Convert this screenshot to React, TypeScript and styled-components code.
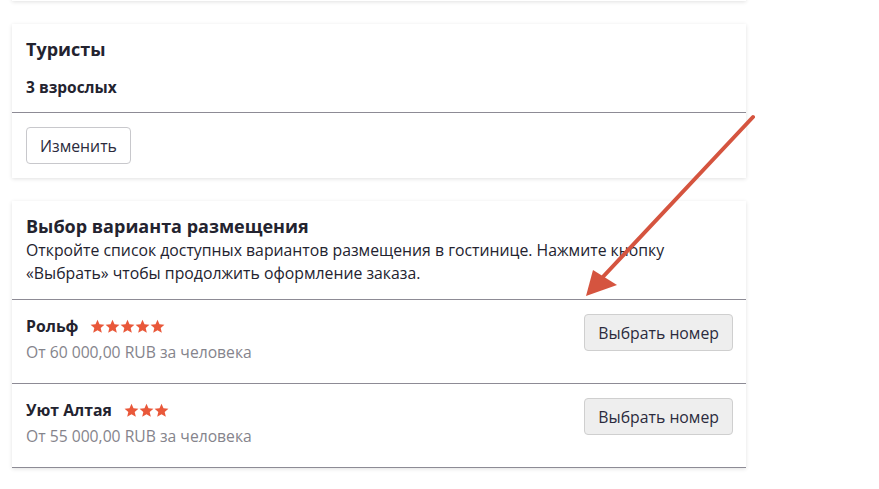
import styled, {createGlobalStyle} from "styled-components";

const GlobalStyle = createGlobalStyle`
  html, body {
    margin: 0;
    padding: 0;
    background: #ffffff;
    font-family: "Open Sans", "Liberation Sans", sans-serif;
    color: #23232f;
  }
`;

type Hotel = {
    name: string;
    stars: number;
    price: string;
};

const hotels: Hotel[] = [
    {name: "Рольф", stars: 5, price: "От 60 000,00 RUB за человека"},
    {name: "Уют Алтая", stars: 3, price: "От 55 000,00 RUB за человека"},
];

const Page = styled.div`
  position: relative;
  width: 879px;
  height: 489px;
  overflow: hidden;
`;

const Column = styled.div`
  display: flex;
  flex-direction: column;
  gap: 23px;
  width: 734px;
  margin: -40px 0 0 12px;
`;

const Card = styled.section`
  background: #fff;
  box-shadow: 0 1px 4px rgba(0, 0, 0, 0.12);
`;

const Stub = styled(Card)`
  height: 41px;
`;

const Head = styled.div<{$top?: number; $bottom?: number}>`
  padding: ${p => p.$top ?? 13}px 14px ${p => p.$bottom ?? 13}px;
  border-bottom: 1px solid #8d8b95;
`;

const Title = styled.h2`
  margin: 0;
  font-size: 18px;
  line-height: 25px;
  font-weight: 700;
`;

const Sub = styled.div`
  margin-top: 13px;
  font-size: 15.5px;
  line-height: 24px;
  font-weight: 700;
`;

const Desc = styled.p`
  margin: 0;
  font-size: 15.8px;
  line-height: 23px;
`;

const Foot = styled.div`
  padding: 14px;
`;

const Button = styled.button<{$grey?: boolean}>`
  font-family: "Open Sans", "Liberation Sans", sans-serif;
  font-size: 15.8px;
  color: #2b2b3d;
  height: 37px;
  padding: 0 13px;
  border: 1px solid ${p => (p.$grey ? "#cfcfcf" : "#c8c8cc")};
  border-radius: 4px;
  background: ${p => (p.$grey ? "#eeeeee" : "#ffffff")};
  cursor: pointer;
`;

const Row = styled.div`
  display: flex;
  justify-content: space-between;
  align-items: flex-start;
  padding: 14px 13px 19px 14px;
  border-bottom: 1px solid #8d8b95;
`;

const NameLine = styled.div`
  display: flex;
  align-items: center;
  gap: 12px;
  font-size: 15.8px;
  line-height: 24px;
  font-weight: 700;
`;

const Stars = styled.span`
  display: inline-flex;
  gap: 0;
`;

const Price = styled.div`
  margin-top: 3px;
  font-size: 15.7px;
  line-height: 23px;
  color: #85848c;
`;

const Arrow = styled.svg`
  position: absolute;
  left: 0;
  top: 0;
  pointer-events: none;
`;

function Star() {
    return (
        <svg width="15" height="15" viewBox="0 0 24 24">
            <path
                fill="#e9583a"
                d="M12 1l3.2 7.3 7.9.7-6 5.2 1.8 7.8L12 17.9 5.1 22l1.8-7.8-6-5.2 7.9-.7z"
            />
        </svg>
    );
}

export default function App() {
    return (
        <Page>
            <GlobalStyle/>
            <Column>
                <Stub/>
                <Card>
                    <Head>
                        <Title>Туристы</Title>
                        <Sub>3 взрослых</Sub>
                    </Head>
                    <Foot>
                        <Button>Изменить</Button>
                    </Foot>
                </Card>
                <Card>
                    <Head $top={13} $bottom={14}>
                        <Title>Выбор варианта размещения</Title>
                        <Desc>
                            Откройте список доступных вариантов размещения в гостинице. Нажмите кнопку
                            «Выбрать» чтобы продолжить оформление заказа.
                        </Desc>
                    </Head>
                    {hotels.map(h => (
                        <Row key={h.name}>
                            <div>
                                <NameLine>
                                    {h.name}
                                    <Stars>
                                        {Array.from({length: h.stars}).map((_, i) => <Star key={i}/>)}
                                    </Stars>
                                </NameLine>
                                <Price>{h.price}</Price>
                            </div>
                            <Button $grey>Выбрать номер</Button>
                        </Row>
                    ))}
                </Card>
            </Column>
            <Arrow width="879" height="489" viewBox="0 0 879 489">
                <line x1="753" y1="117" x2="600" y2="280" stroke="#d5543f" strokeWidth="4" strokeLinecap="round"/>
                <polygon points="586,296 593,270 617,285" fill="#d5543f"/>
            </Arrow>
        </Page>
    );
}
